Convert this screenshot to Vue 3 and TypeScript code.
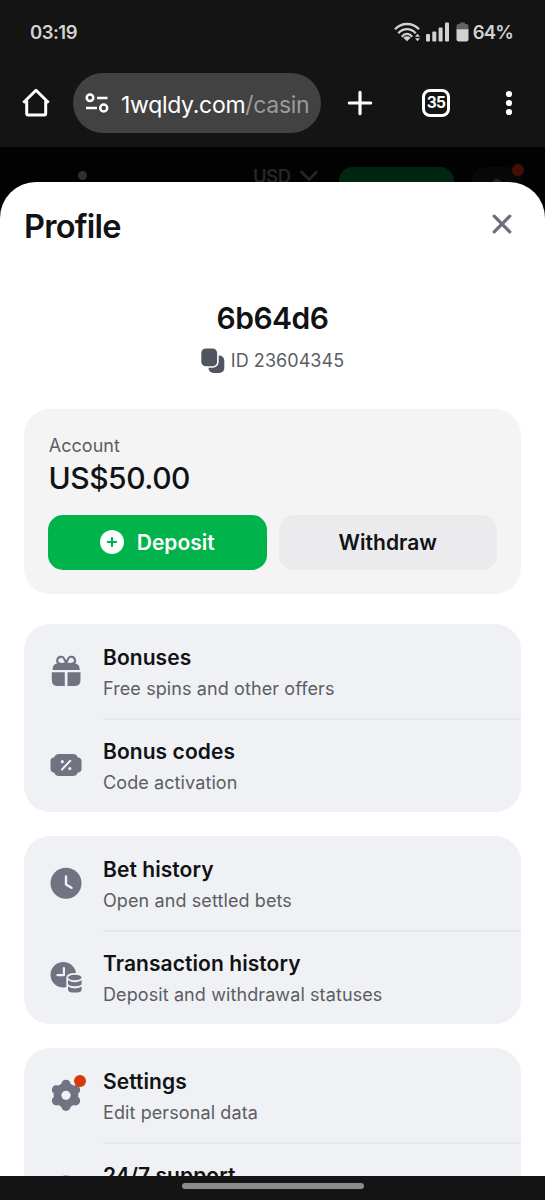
<script setup lang="ts">
type IconName = 'gift' | 'ticket' | 'clock' | 'transactions' | 'gear' | 'support'

interface MenuItem {
  key: string
  icon: IconName
  title: string
  subtitle: string
  badge?: boolean
}

const groups: MenuItem[][] = [
  [
    { key: 'bonuses', icon: 'gift', title: 'Bonuses', subtitle: 'Free spins and other offers' },
    { key: 'codes', icon: 'ticket', title: 'Bonus codes', subtitle: 'Code activation' },
  ],
  [
    { key: 'bets', icon: 'clock', title: 'Bet history', subtitle: 'Open and settled bets' },
    { key: 'transactions', icon: 'transactions', title: 'Transaction history', subtitle: 'Deposit and withdrawal statuses' },
  ],
  [
    { key: 'settings', icon: 'gear', title: 'Settings', subtitle: 'Edit personal data', badge: true },
    { key: 'support', icon: 'support', title: '24/7 support', subtitle: '' },
  ],
]

const teeth: number[] = [0, 60, 120]
</script>

<template>
  <div class="screen">
    <div class="status">
      <span class="time">03:19</span>
      <svg class="wifi" width="27" height="20" viewBox="0 0 27 20" fill="none" stroke="#d2d2d2" stroke-width="2.300">
        <path d="M1 7.300C7.500 .2 18.500 .2 25 7.300" />
        <path d="M4.300 11.200C9.500 5.700 16.500 5.700 21.700 11.200" />
        <path d="M7.800 14.800C11 11 15 11 18.200 14.800" />
        <path d="M9.300 15.700Q13 12.800 16.700 15.700L13 19.300Z" fill="#d2d2d2" stroke="none" />
        <path d="M21 14.700L23.500 11.700L26 14.700ZM21 16.200L23.500 19.200L26 16.200Z" fill="#d2d2d2" stroke="none" />
      </svg>
      <svg class="signal" width="24" height="20" viewBox="0 0 24 20" fill="#d2d2d2">
        <rect x="0" y="12" width="4" height="7.500" rx="1" />
        <rect x="6.300" y="9.500" width="4" height="10" rx="1" />
        <rect x="12.600" y="5.500" width="4" height="14" rx="1" />
        <rect x="19" y="0.500" width="4" height="19" rx="1" />
      </svg>
      <svg class="battery" width="13" height="20" viewBox="0 0 13 20">
        <path d="M4 1.500Q4 .5 5 .5H8Q9 .5 9 1.500V2H10.500Q12.500 2 12.500 4V8H.5V4Q.5 2 2.500 2H4Z" fill="#626262" />
        <path d="M.5 7.300H12.500V17Q12.500 19.500 10 19.500H3Q.5 19.500 .5 17Z" fill="#d2d2d2" />
      </svg>
      <span class="percent">64%</span>
    </div>

    <div class="toolbar">
      <svg class="home" width="30" height="30" viewBox="0 0 30 30" fill="none" stroke="#fff" stroke-width="3" stroke-linejoin="round">
        <path d="M2.300 14.700L15 2.300L27.700 14.700" />
        <path d="M5.700 12.500V25.500Q5.700 26.900 7.100 26.900H23.300Q24.700 26.900 24.700 25.500V12.500" />
      </svg>
      <div class="url">
        <svg width="24" height="20" viewBox="0 0 24 20" fill="none" stroke="#fff" stroke-width="2.500">
          <circle cx="5" cy="4.700" r="3.300" />
          <path d="M12 5H22.500M1 15H12" />
          <circle cx="18.700" cy="15" r="3.500" />
        </svg>
        <span class="address">1wqldy.com<span class="path">/casin</span></span>
      </div>
      <svg class="plus" width="26" height="26" viewBox="0 0 26 26" stroke="#fff" stroke-width="3.200" stroke-linecap="round">
        <path d="M13 2.300V23.700M2.300 13H23.700" />
      </svg>
      <div class="tabs">35</div>
      <svg class="more" width="8" height="26" viewBox="0 0 8 26" fill="#fff">
        <circle cx="4" cy="4" r="3.100" /><circle cx="4" cy="13" r="3.100" /><circle cx="4" cy="22" r="3.100" />
      </svg>
    </div>

    <div class="dimmed">
      <span class="speck"></span>
      <span class="currency">USD</span>
      <svg class="chevron" width="20" height="12" viewBox="0 0 20 12" fill="none" stroke="#262628" stroke-width="2.600" stroke-linecap="round" stroke-linejoin="round">
        <path d="M2.500 2L10 9.500L17.500 2" />
      </svg>
      <span class="green"></span>
      <span class="avatar">
        <svg width="12" height="10" viewBox="0 0 12 10"><circle cx="6" cy="6" r="5" fill="#252527" /></svg>
        <i></i>
      </span>
    </div>

    <main class="sheet">
      <header class="head">
        <h1>Profile</h1>
        <svg width="22" height="22" viewBox="0 0 22 22" stroke="#6c6f7d" stroke-width="3.300" stroke-linecap="round">
          <path d="M3.200 3.200L18.800 18.800M18.800 3.200L3.200 18.800" />
        </svg>
      </header>

      <section class="user">
        <div class="name">6b64d6</div>
        <div class="id">
          <svg width="24" height="26" viewBox="0 0 24 26" fill="#515561">
            <rect x="7.500" y="7.500" width="15.800" height="17.500" rx="5" />
            <rect x="-1" y="-1" width="18.700" height="20.700" rx="6" fill="#fff" />
            <rect x=".3" y=".5" width="15.800" height="17.800" rx="4.500" />
          </svg>
          <span>ID 23604345</span>
        </div>
      </section>

      <section class="account">
        <div class="label">Account</div>
        <div class="balance">US$50.00</div>
        <div class="actions">
          <button class="deposit" type="button">
            <svg width="24" height="24" viewBox="0 0 24 24">
              <circle cx="12" cy="12" r="12" fill="#fff" />
              <path d="M12 7.700V16.300M7.700 12H16.300" stroke="#00b34b" stroke-width="2" stroke-linecap="round" />
            </svg>
            <span>Deposit</span>
          </button>
          <button class="withdraw" type="button"><span>Withdraw</span></button>
        </div>
      </section>

      <ul v-for="(group, index) in groups" :key="index" class="menu">
        <li v-for="item in group" :key="item.key">
          <div class="icon">
            <svg width="36" height="36" viewBox="0 0 36 36" fill="#707482">
              <template v-if="item.icon === 'gift'">
                <path d="M17.500 10.500C13 11.500 8.800 10.800 9.200 7.300C9.700 3.300 14.500 2.700 16 5.500C17 7.300 17.700 9 18.150 10.500C18.600 9 19.300 7.300 20.300 5.500C21.800 2.700 26.600 3.300 27.100 7.300C27.500 10.800 23.300 11.500 18.800 10.500" fill="none" stroke="#707482" stroke-width="2.100" />
                <path d="M9.500 10.300H26.800Q31.800 11 31.800 17H4.500Q4.500 11 9.500 10.300Z" />
                <path d="M3.800 19.200H16.800V33H9.800Q3.800 33 3.800 27ZM19.500 19.200H32.500V27Q32.500 33 26.500 33H19.500Z" />
              </template>
              <template v-else-if="item.icon === 'ticket'">
                <path d="M11 7H25Q28.500 7 29.700 10.200Q33.500 10.800 33.500 14V22Q33.500 25.200 29.700 25.800Q28.500 29 25 29H11Q7.500 29 6.300 25.800Q2.500 25.200 2.500 22V14Q2.500 10.800 6.300 10.200Q7.500 7 11 7Z" />
                <path d="M14 22.500L22.300 13.700" stroke="#f0f1f5" stroke-width="2" stroke-linecap="round" />
                <circle cx="14.300" cy="14.700" r="1.600" fill="#f0f1f5" />
                <circle cx="21.800" cy="21.600" r="1.600" fill="#f0f1f5" />
              </template>
              <template v-else-if="item.icon === 'clock'">
                <circle cx="18" cy="18.200" r="15.500" />
                <path d="M18 11.500V19.500L23.500 22.800" fill="none" stroke="#f0f1f5" stroke-width="2.400" stroke-linecap="round" stroke-linejoin="round" />
              </template>
              <template v-else-if="item.icon === 'transactions'">
                <circle cx="15.300" cy="15.700" r="12.800" />
                <path d="M15.900 9V16.200H9.500" fill="none" stroke="#f0f1f5" stroke-width="2.200" stroke-linecap="round" stroke-linejoin="round" />
                <path d="M18.300 19Q18.300 14 26.700 14Q35 14 35 19V35H18.300Z" fill="#f0f1f5" />
                <ellipse cx="26.800" cy="18.500" rx="6.700" ry="2.800" />
                <path d="M20 21.300Q26.800 25.200 33.600 21.300V24.500Q33.600 27.300 26.800 27.300Q20 27.300 20 24.500Z" />
                <path d="M20 27.500Q26.800 31.400 33.600 27.500V30.700Q33.600 33.600 26.800 33.600Q20 33.600 20 30.700Z" />
              </template>
              <template v-else-if="item.icon === 'gear'">
                <circle cx="18" cy="18.300" r="12.300" />
                <rect v-for="angle in teeth" :key="angle" x="13.400" y="2.700" width="9.200" height="31.200" rx="4.500" :transform="`rotate(${angle} 18 18.300)`" />
                <circle cx="18" cy="18.300" r="4.600" fill="#f0f1f5" />
              </template>
              <circle v-else cx="18" cy="19.500" r="15" />
            </svg>
            <span v-if="item.badge" class="badge"></span>
          </div>
          <div class="text">
            <div class="title">{{ item.title }}</div>
            <div class="subtitle">{{ item.subtitle }}</div>
          </div>
        </li>
      </ul>
    </main>

    <footer class="gesture"><span></span></footer>
  </div>
</template>

<style>
body { margin: 0; background: #141414; }
</style>

<style scoped>
.screen {
  width: 545px;
  height: 1200px;
  overflow: hidden;
  display: flex;
  flex-direction: column;
  background: #141414;
  font-family: Inter, "Liberation Sans", sans-serif;
  color: #111214;
}
.screen > * { box-sizing: border-box; flex: none; }

.status {
  height: 60px;
  padding: 4px 32px 0 30px;
  display: flex;
  align-items: center;
  color: #d2d2d2;
  font-size: 18.500px;
  font-weight: 600;
}
.time { margin-right: auto; letter-spacing: -.5px; }
.wifi { margin-right: 5px; }
.signal { margin-right: 6px; }
.battery { margin-right: 4px; }
.percent { letter-spacing: -.8px; }

.toolbar {
  height: 87px;
  padding: 0 32px 1px 21px;
  display: flex;
  align-items: center;
}
.url {
  box-sizing: border-box;
  width: 248px;
  height: 60px;
  margin: 0 26px 0 22px;
  padding: 0 12px;
  border-radius: 30px;
  background: #424242;
  display: flex;
  align-items: center;
  gap: 12px;
}
.url svg { flex: none; }
.address { padding-top: 3px; color: #fff; font-size: 23px; white-space: nowrap; letter-spacing: -.3px; }
.path { color: #9b9b9b; }
.tabs {
  box-sizing: border-box;
  width: 28px;
  height: 28px;
  margin: 0 auto 0 49px;
  border: 3px solid #fff;
  border-radius: 8px;
  color: #fff;
  font-size: 15.500px;
  font-weight: 700;
  line-height: 22px;
  letter-spacing: -.6px;
  display: flex;
  justify-content: center;
}

.dimmed {
  height: 70px;
  padding: 17px 20px 0 78px;
  display: flex;
  align-items: flex-start;
  background: #020202;
}
.speck { width: 9px; height: 9px; margin: 7px 166px 0 0; border-radius: 50%; background: #303030; }
.currency { width: 38px; color: #262628; font-size: 18.500px; font-weight: 600; line-height: 25px; letter-spacing: -.5px; }
.chevron { margin: 6px 20px 0 8px; }
.green { width: 115px; height: 53px; margin-top: 3px; border-radius: 14px; background: #002511; }
.avatar { position: relative; width: 50px; height: 50px; margin: 3px 0 0 18px; border-radius: 14px; background: #080808; display: flex; justify-content: center; }
.avatar svg { margin-top: 11px; }
.avatar i { position: absolute; top: -3px; right: -2px; width: 12px; height: 12px; border-radius: 50%; background: #421003; }

.sheet {
  position: relative;
  height: 994px;
  margin-top: -35px;
  padding: 0 24px;
  overflow: hidden;
  border-radius: 36px 36px 0 0;
  background: #fff;
}
.head {
  height: 85px;
  padding: 0 8px 0 0;
  display: flex;
  align-items: center;
  justify-content: space-between;
}
.head svg { margin-top: -1px; }
h1 { margin: 5px 0 0; font-size: 32.500px; font-weight: 600; letter-spacing: -.75px; line-height: 40px; }
.user { padding-top: 31px; display: flex; flex-direction: column; align-items: center; }
.name { font-size: 30px; font-weight: 600; line-height: 40px; letter-spacing: -.5px; }
.id { margin-top: 9px; display: flex; align-items: center; gap: 6px; height: 26px; color: #5b5d63; font-size: 18px; letter-spacing: .05px; }
.id svg { margin-top: 2px; }

.account {
  box-sizing: border-box;
  height: 185px;
  margin: 36px 0 30px;
  padding: 26px 24px 0;
  border-radius: 26px;
  background: #f4f4f4;
}
.label { padding-left: .7px; color: #5b5d63; font-size: 18px; line-height: 22px; letter-spacing: .05px; }
.balance { padding-left: .5px; margin-top: 1px; font-size: 30px; font-weight: 550; line-height: 40px; letter-spacing: -.45px; }
.actions { margin-top: 17px; display: grid; grid-template-columns: 1fr 1fr; gap: 12px; }
button {
  height: 55px;
  padding: 0 0 1px;
  border: 0;
  border-radius: 15px;
  display: flex;
  align-items: center;
  justify-content: center;
  gap: 13px;
  font: 600 21px Inter, "Liberation Sans", sans-serif;
}
.deposit { background: #00b34b; color: #fff; }
.withdraw { background: #ebebed; color: #111214; letter-spacing: .05px; }

.menu { margin: 0 0 24.200px; padding: 0; list-style: none; border-radius: 26px; background: #f0f1f5; overflow: hidden; }
li { height: 94px; display: flex; }
.icon { position: relative; width: 36px; height: 36px; margin: 29px 19px 0 24px; flex: none; }
.icon svg { display: block; }
.badge { position: absolute; left: 26px; top: -2px; width: 12px; height: 12px; border-radius: 50%; background: #d43a0b; }
.text { flex: 1; height: 95.500px; padding-top: 21px; box-sizing: border-box; }
li:not(:last-child) .text { border-bottom: 2px solid #e6e7eb; }
.title { font-size: 21px; font-weight: 600; line-height: 26px; letter-spacing: .07px; white-space: nowrap; }
.subtitle { margin-top: 6px; color: #5b5d63; font-size: 18px; line-height: 24px; letter-spacing: .1px; white-space: nowrap; }

.gesture { height: 24px; padding-top: 7px; display: flex; justify-content: center; background: #141414; }
.gesture span { width: 182px; height: 6px; border-radius: 3px; background: #8b8b8b; }
</style>
